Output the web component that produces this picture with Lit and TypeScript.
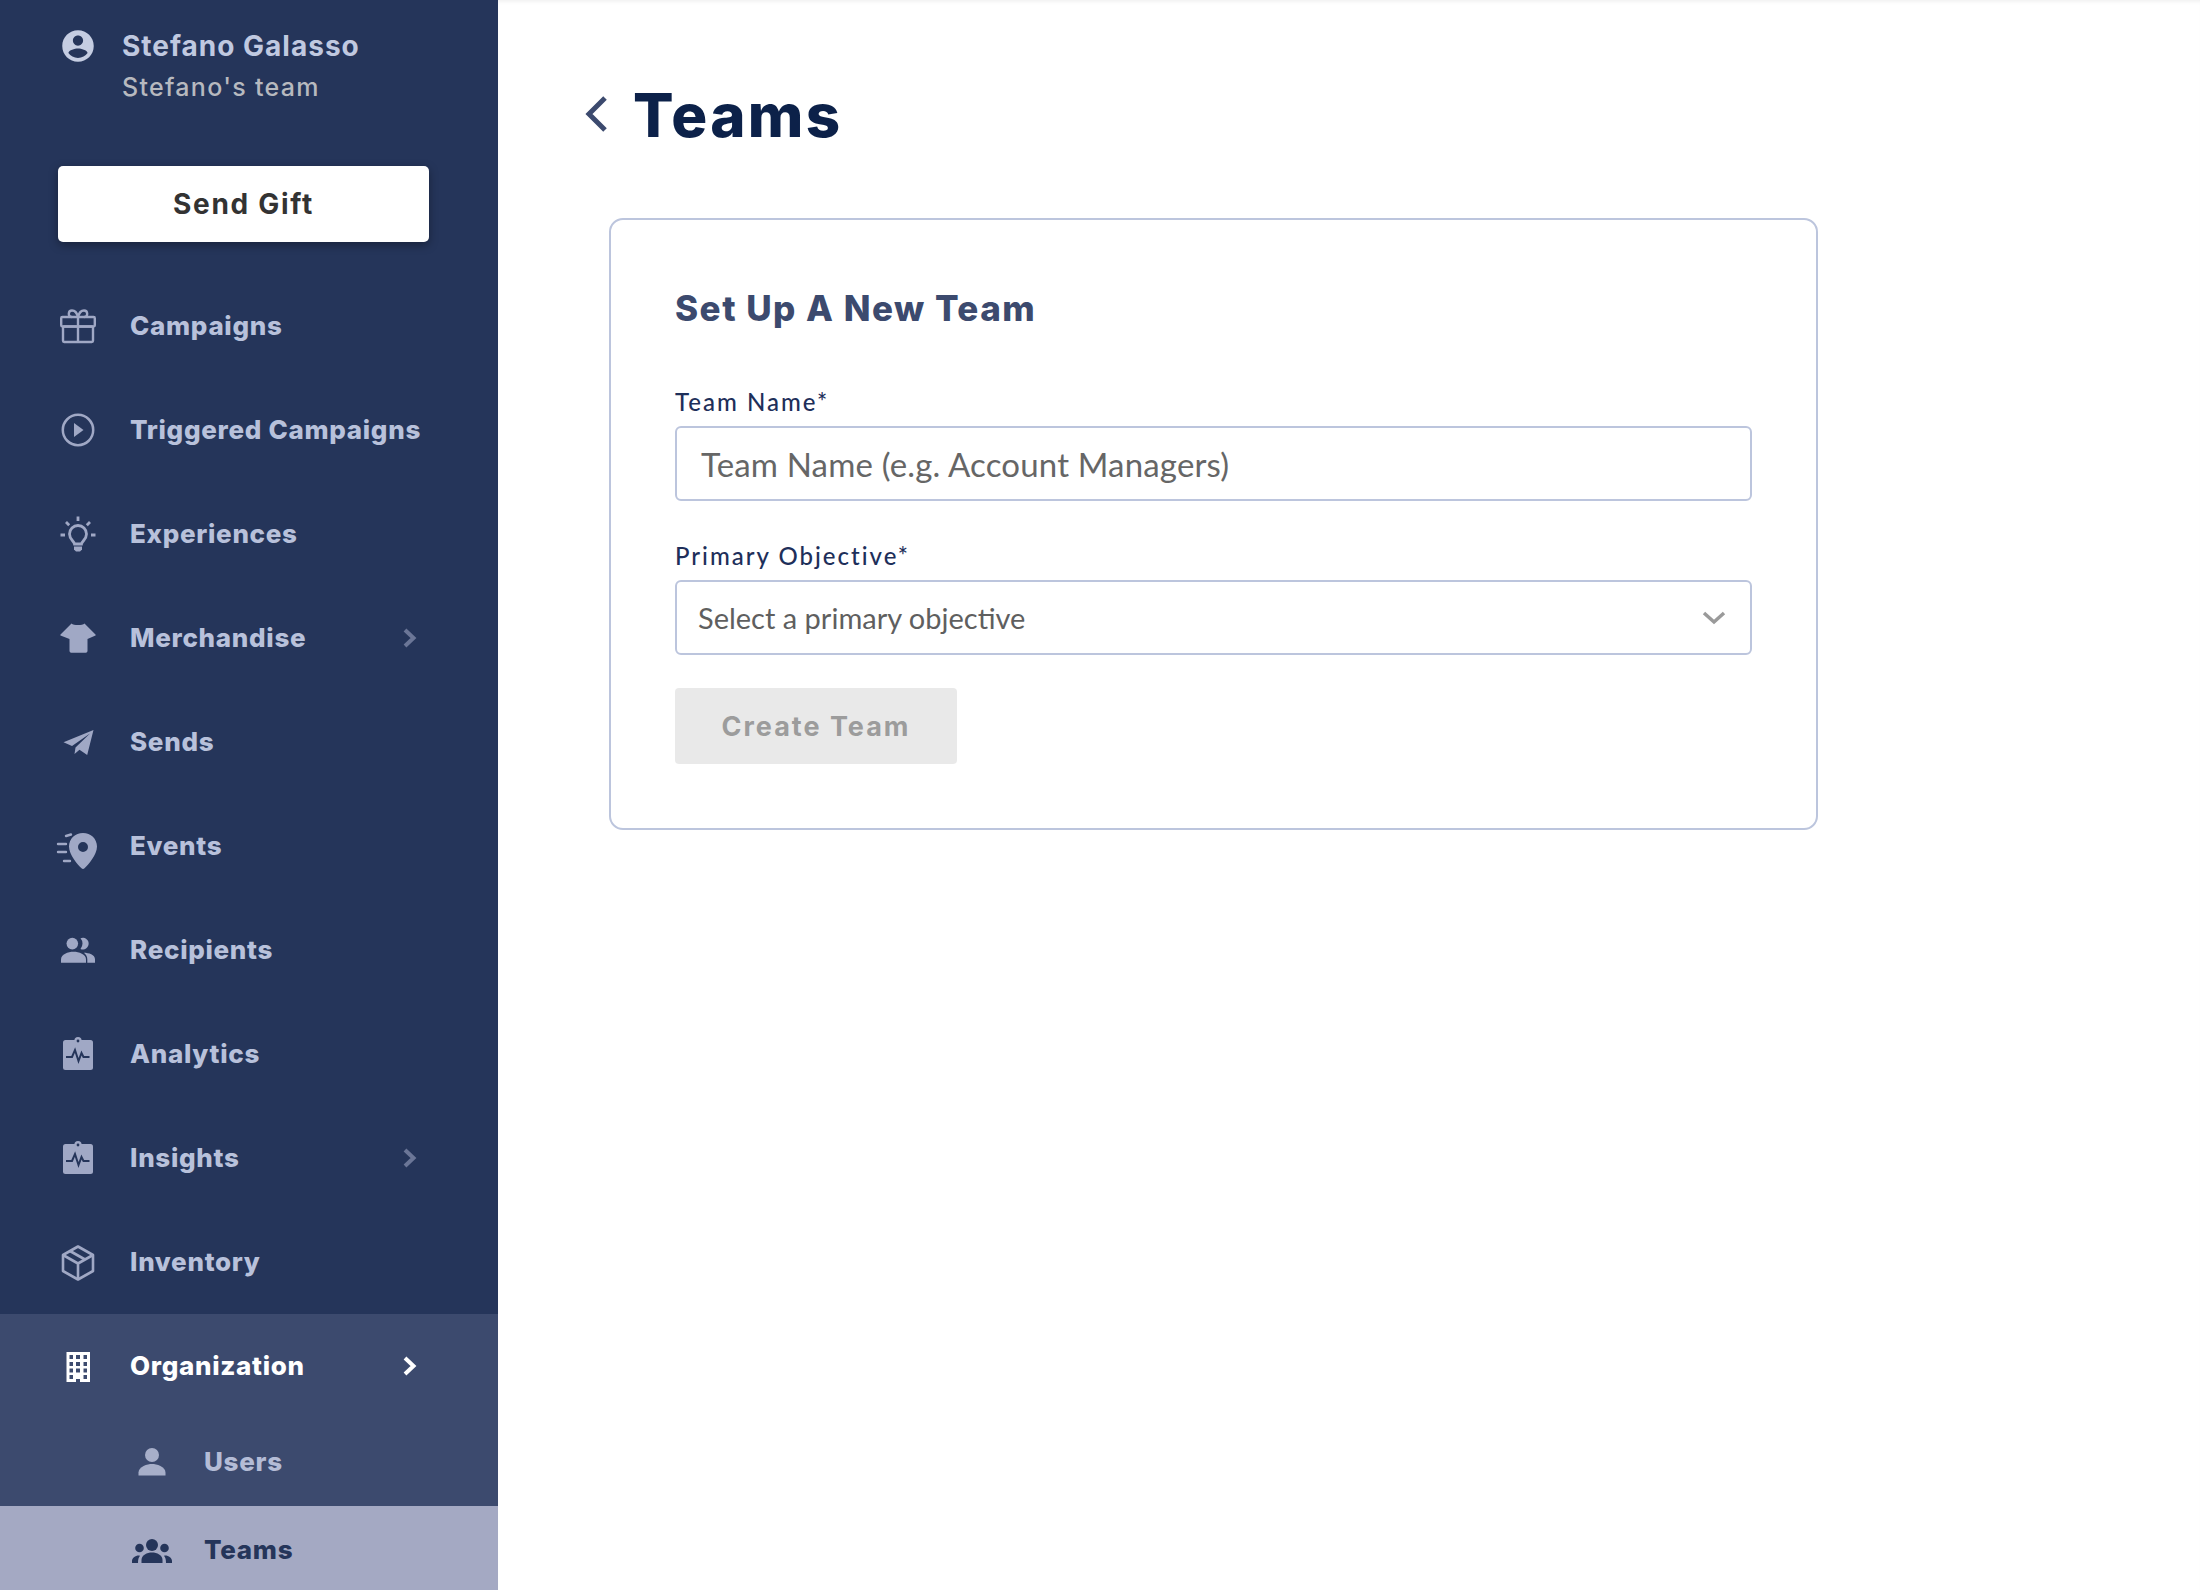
import { LitElement, html, css, svg } from "lit";
import { customElement } from "lit/decorators.js";

const CLIP = svg`<rect x="3" y="4" width="30" height="30" rx="2.5" fill="currentColor"/><circle cx="18" cy="4.5" r="3.6" fill="currentColor"/><circle cx="18" cy="5" r="1.4" fill="#25355a"/><path d="M6 21h6l3-7 3.5 11 3-8 2 4h6" fill="none" stroke="#25355a" stroke-width="2"/>`;
const ICONS: Record<string, unknown> = {
  gift: svg`<g fill="none" stroke="currentColor" stroke-width="2.4" stroke-linejoin="round"><rect x="1.2" y="9" width="33.6" height="9.5" rx="1.2"/><rect x="3" y="18.5" width="30" height="15.5" rx="1.2"/><path d="M18 9v25"/><path d="M18 9c-1-4-3-6.5-6-6.5-4 0-4.500 6.500 0 6.500M18 9c1-4 3-6.500 6-6.500 4 0 4.500 6.500 0 6.500"/></g>`,
  play: svg`<circle cx="18" cy="18" r="15.200" fill="none" stroke="currentColor" stroke-width="2.500"/><path d="M14 11l9.500 7-9.500 7z" fill="currentColor"/>`,
  bulb: svg`<g fill="none" stroke="currentColor" stroke-width="2.800" stroke-linecap="butt"><path d="M18 0.500v4.500M6 6l3.200 3.200M30 6l-3.200 3.200M0.500 19h4.500M31 19h4.500"/><path d="M14.500 28c-.5-3-5-4.500-5-10a8.500 8.500 0 0 1 17 0c0 5.500-4.500 7-5 10z"/></g><path d="M14 30.500h8v3l-2 2h-4l-2-2z" fill="currentColor"/>`,
  shirt: svg`<path d="M11.500 3.500c2 2 11 2 13 0L35.500 14.500q.5.500 0 1L27.500 19V31q0 1.700-1.700 1.700H11.200Q9.500 32.700 9.500 31V19L.5 15.500q-.5-.5 0-1z" fill="currentColor"/>`,
  plane: svg`<path d="M33.500 6L3.500 18.300l8.500 3.700L30 9.500 15.500 23.500l-1 6.500 5-4.300 7.700 5.300z" fill="currentColor"/>`,
  pin: svg`<path fill-rule="evenodd" d="M23 5c7.800 0 14 5.800 14 13.500C37 27 28 37 24.500 40.300q-1.500 1.300-3 0C18 37 9 27 9 18.500 9 10.800 15.200 5 23 5zm0 9a5 5 0 1 0 0 10 5 5 0 0 0 0-10z" fill="currentColor"/><path d="M6 8l5-1.500M-2 16h8M-2 24h8M4 33h6" fill="none" stroke="currentColor" stroke-width="2.400" stroke-linecap="round"/>`,
  group: svg`<g fill="currentColor"><circle cx="12.300" cy="11.600" r="5.800"/><path d="M20.500 6.300a5.800 5.800 0 1 1 0 10.600 8 8 0 0 0 0-10.600z"/><path d="M1 30.700v-3.500c0-5 7-7.500 12.500-7.500S26 22.200 26 27.200v3.500z"/><path d="M27.300 30.700v-3.500c0-3-1.500-5-3.500-6.500 5 0 11.200 2 11.200 6.500v3.500z"/></g>`,
  clip: CLIP,
  box: svg`<g fill="none" stroke="currentColor" stroke-width="2.600" stroke-linejoin="round"><path d="M18 2.500L33 11v16l-15 8.500L3 27V11z"/><path d="M3 11l15 8.500L33 11M18 19.500v16M10 7l15 8.500"/></g>`,
  building: svg`<path fill-rule="evenodd" fill="currentColor" d="M6.500 4H30v30h-10v-3h-4v3H6.500zM9.500 7v4H13V7zM16 7v4h4V7zM23.500 7v4H27V7zM9.500 14v4H13v-4zM16 14v4h4v-4zM23.500 14v4H27v-4zM9.500 20.500v4H13v-4zM16 20.500v4h4v-4zM23.500 20.500v4H27v-4zM9.500 27v4H13v-4zM23.500 27v4H27v-4z"/>`,
  person: svg`<circle cx="18" cy="11" r="7" fill="currentColor"/><path d="M4.500 31.500v-3c0-6 9-8.500 13.500-8.500s13.500 2.500 13.500 8.500v3z" fill="currentColor"/>`,
  groups: svg`<g fill="currentColor"><circle cx="18" cy="13" r="6"/><circle cx="5.500" cy="16" r="4.300"/><circle cx="30.500" cy="16" r="4.300"/><path d="M7.500 31v-3c0-5 5.500-7.500 10.500-7.500s10.500 2.500 10.500 7.500v3z"/><path d="M-2 31v-2c0-3 3-5.500 7-5.500l1 .2C4.500 25.500 4 27.500 4 31z"/><path d="M38 31v-2c0-3-3-5.500-7-5.500l-1 .2c1.500 1.800 2 3.800 2 7.300z"/></g>`,
};

interface NavItem { label: string; icon: string; chevron?: boolean; }

const NAV: NavItem[] = [
  { label: "Campaigns", icon: "gift" },
  { label: "Triggered Campaigns", icon: "play" },
  { label: "Experiences", icon: "bulb" },
  { label: "Merchandise", icon: "shirt", chevron: true },
  { label: "Sends", icon: "plane" },
  { label: "Events", icon: "pin" },
  { label: "Recipients", icon: "group" },
  { label: "Analytics", icon: "clip" },
  { label: "Insights", icon: "clip", chevron: true },
  { label: "Inventory", icon: "box" },
];

@customElement("app-root")
export class AppRoot extends LitElement {
  static styles = css`
    :host { display: block; width: 2200px; height: 1590px; overflow: hidden; background: #fff; font-family: "Lato", sans-serif; }
    .page { display: flex; height: 1590px; }
    .side { width: 498px; flex: none; height: 1590px; overflow: hidden; background: #25355a; display: flex; flex-direction: column; font-family: "Inter", sans-serif; }
    .profile { display: flex; gap: 26px; padding: 28px 0 0 60px; height: 138px; box-sizing: border-box; flex: none; }
    .ico { width: 36px; height: 36px; flex: none; overflow: visible; display: block; }
    .profile .ico { color: #c5cde2; }
    .who { display: flex; flex-direction: column; gap: 8px; }
    .name { font-size: 28px; line-height: 36px; font-weight: 700; color: #c0c9e0; letter-spacing: 1px; }
    .team { font-size: 25px; line-height: 30px; font-weight: 500; color: #b7b9bf; letter-spacing: 1.3px; }
    .gift { flex: none; margin: 28px 0 32px 58px; width: 371px; height: 76px; box-sizing: border-box; border-radius: 5px; background: #fff; box-shadow: 0 3px 10px rgba(0,0,0,.35); display: flex; align-items: center; justify-content: center; font-size: 28px; font-weight: 700; color: #333; letter-spacing: 1.7px; }
    .row { height: 104px; flex: none; display: flex; align-items: center; padding-left: 60px; box-sizing: border-box; color: #a0a8c5; }
    .label { margin-left: 34px; font-size: 26px; font-weight: 800; color: #b8c1db; letter-spacing: 0.7px; flex: 1; line-height: 34px; }
    .chev { width: 13px; height: 20px; margin-right: 82px; flex: none; color: #6b7697; overflow: visible; }
    .org { background: #3c4a6e; display: flex; flex-direction: column; flex: none; }
    .org .row { color: #fff; }
    .org .row .label, .org .row .chev { color: #fff; }
    .sub { height: 88px; flex: none; display: flex; align-items: center; padding-left: 134px; box-sizing: border-box; color: #a7afc9; }
    .sub .label { margin-left: 34px; color: #b4bcd6; }
    .sub.active { background: #a4a9c3; color: #25355a; }
    .sub.active .label { color: #25355a; }
    .main { flex: 1; box-shadow: inset 0 4px 4px -3px rgba(0,0,0,.08); font-family: "Lato", sans-serif; }
    .head { display: flex; align-items: center; height: 218px; padding: 8px 0 0 86px; box-sizing: border-box; }
    .back { width: 24px; height: 38px; flex: none; color: #3c4a6e; margin-right: 25px; position: relative; top: 1px; }
    h1 { margin: 0; font-family: "Inter", sans-serif; font-size: 60px; line-height: 74px; font-weight: 800; color: #0c2149; position: relative; top: 2px; letter-spacing: 2.3px; }
    .card { margin-left: 111px; width: 1209px; height: 612px; box-sizing: border-box; border: 2px solid #bcc5dd; border-radius: 14px; padding: 66px 64px 0 64px; display: flex; flex-direction: column; }
    h2 { margin: 0 0 58px; font-family: "Inter", sans-serif; font-size: 35px; line-height: 44px; font-weight: 800; color: #3c4a6e; letter-spacing: 1.5px; }
    .lbl { font-size: 24px; line-height: 28px; font-weight: 500; color: #1e2f5a; letter-spacing: 2px; margin-bottom: 10px; }
    .field { height: 75px; box-sizing: border-box; border: 2px solid #bcc5dd; border-radius: 6px; display: flex; align-items: center; color: #666; margin-bottom: 41px; flex: none; }
    .field.input { padding-left: 24px; font-size: 33px; letter-spacing: 0.17px; }
    .field.sel { padding: 0 24px 0 21px; font-size: 29px; justify-content: space-between; margin-bottom: 33px; color: #5f5f5f; }
    .caret { width: 24px; height: 14px; color: #9a9a9a; flex: none; }
    .btn { font-family: "Inter", sans-serif; width: 282px; height: 76px; border-radius: 4px; background: #e9e9e9; color: #9c9c9c; font-size: 27px; font-weight: 700; letter-spacing: 2px; display: flex; align-items: center; justify-content: center; }
  `;

  private ico(name: string) {
    return html`<svg class="ico" viewBox="0 0 36 36">${ICONS[name]}</svg>`;
  }
  private chev() {
    return html`<svg class="chev" viewBox="0 0 13 20"><path d="M2 2l8.500 8-8.500 8" fill="none" stroke="currentColor" stroke-width="4"/></svg>`;
  }

  render() {
    return html`<div class="page">
      <aside class="side">
        <div class="profile">
          <svg class="ico" viewBox="0 0 24 24"><path fill="currentColor" d="M12 1.500C6.200 1.500 1.500 6.200 1.500 12S6.200 22.500 12 22.500 22.500 17.800 22.500 12 17.800 1.500 12 1.500zm0 3.500c1.900 0 3.400 1.500 3.400 3.400S13.900 11.800 12 11.800 8.600 10.300 8.600 8.400 10.100 5 12 5zm0 15c-2.700 0-5-1.300-6.400-3.300.3-1.900 4.200-3 6.400-3s6.100 1.100 6.400 3C17 18.700 14.700 20 12 20z"/></svg>
          <div class="who"><div class="name">Stefano Galasso</div><div class="team">Stefano's team</div></div>
        </div>
        <div class="gift">Send Gift</div>
        ${NAV.map((n) => html`<div class="row">${this.ico(n.icon)}<span class="label">${n.label}</span>${n.chevron ? this.chev() : ""}</div>`)}
        <div class="org">
          <div class="row">${this.ico("building")}<span class="label">Organization</span>${this.chev()}</div>
          <div class="sub">${this.ico("person")}<span class="label">Users</span></div>
          <div class="sub active">${this.ico("groups")}<span class="label">Teams</span></div>
        </div>
      </aside>
      <main class="main">
        <div class="head">
          <svg class="back" viewBox="0 0 24 38"><path d="M21 3L5 19l16 16" fill="none" stroke="currentColor" stroke-width="5"/></svg>
          <h1>Teams</h1>
        </div>
        <section class="card">
          <h2>Set Up A New Team</h2>
          <div class="lbl">Team Name*</div>
          <div class="field input">Team Name (e.g. Account Managers)</div>
          <div class="lbl">Primary Objective*</div>
          <div class="field sel"><span>Select a primary objective</span><svg class="caret" viewBox="0 0 24 14"><path d="M2 2l10 9 10-9" fill="none" stroke="currentColor" stroke-width="3.500"/></svg></div>
          <div class="btn">Create Team</div>
        </section>
      </main>
    </div>`;
  }
}
